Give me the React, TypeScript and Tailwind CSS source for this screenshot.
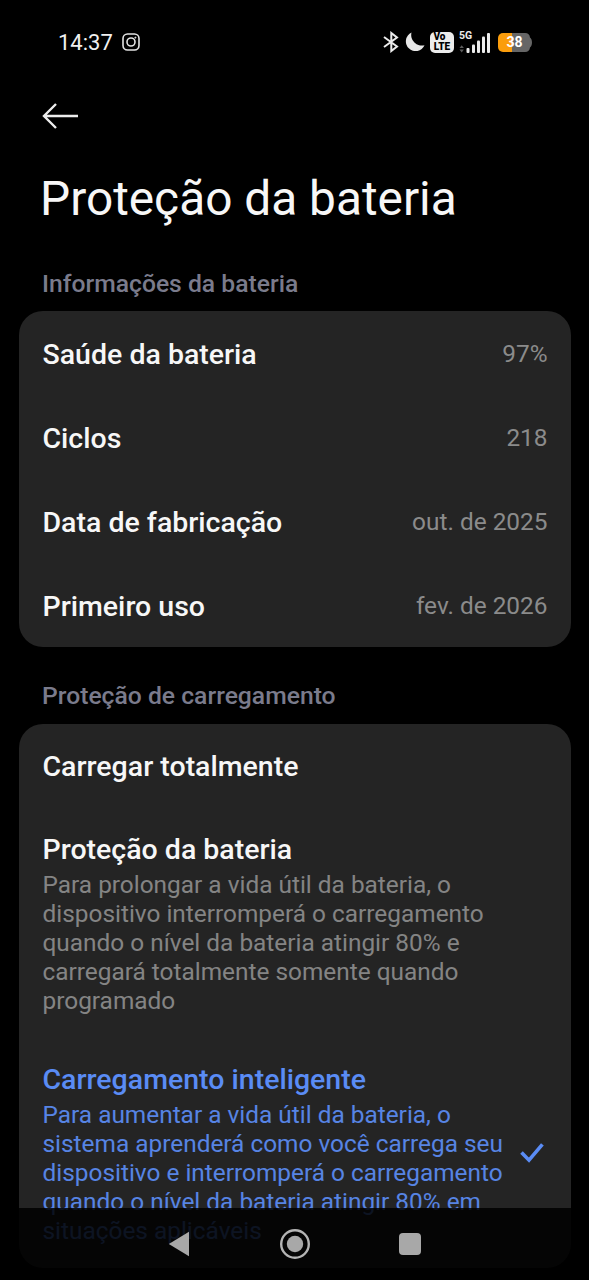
import type { ReactNode } from "react";

const batteryInfo = [
  { label: "Saúde da bateria", value: "97%" },
  { label: "Ciclos", value: "218" },
  { label: "Data de fabricação", value: "out. de 2025" },
  { label: "Primeiro uso", value: "fev. de 2026" },
];

function StatusBar() {
  return (
    <header className="flex h-[84px] items-center justify-between pl-[58px] pr-[57px]">
      <div className="flex items-center gap-[9px]">
        <span className="pt-px text-[22px] leading-7 text-[#f0f0f0]">14:37</span>
        <svg width="18" height="18" viewBox="0 0 18 18" fill="none" stroke="#e4e4e4" strokeWidth="1.6">
          <rect x="1" y="1" width="16" height="16" rx="4.5" />
          <circle cx="9" cy="9" r="4" />
          <circle cx="13.4" cy="4.6" r="0.6" fill="#e4e4e4" strokeWidth="0.8" />
        </svg>
      </div>

      <div className="flex items-center">
        {/* Bluetooth */}
        <svg width="16" height="22" viewBox="0 0 16 22" fill="none" stroke="#ececec" strokeWidth="2">
          <path d="M1 6 14 15.500 8.300 20V2L14 6.500 1 16" />
        </svg>
        {/* Do not disturb */}
        <svg className="ml-[6px]" width="20" height="20" viewBox="0 0 20 20" fill="#e8e8e8">
          <path d="M6.500.6A9.700 9.700 0 1 0 19.500 13.200 10.500 10.500 0 0 1 6.500.6z" />
        </svg>
        {/* VoLTE */}
        <div className="ml-[5px] flex h-[21px] w-6 flex-col items-center justify-center rounded-[5px] bg-[#ececec] text-[10px] font-black leading-none text-black">
          <span className="-ml-[5px]">Vo</span>
          <span>LTE</span>
        </div>
        {/* Signal */}
        <div className="relative ml-[5px] h-[23px] w-[32px]">
          <span className="absolute left-0 top-0 text-[10.5px] font-bold leading-[9px] text-[#ececec]">5G</span>
          <svg width="32" height="23" viewBox="0 0 32 23" fill="#ececec">
            <path d="M.5 17 2.7 14.2 4.9 17zM.5 18.6 2.7 21.4 4.9 18.6z" fill="#5c5c5c" />
            <rect x="7.5" y="17" width="3" height="5" rx="1" />
            <rect x="13" y="13.5" width="3" height="8.5" rx="1" />
            <rect x="18" y="9.5" width="3" height="12.5" rx="1" />
            <rect x="23" y="5.5" width="3" height="16.5" rx="1" />
            <rect x="28" y="2" width="3" height="20" rx="1" />
          </svg>
        </div>
        {/* Battery */}
        <div className="relative ml-[7px] h-[19px] w-[34px]">
          <svg width="34" height="19" viewBox="0 0 34 19">
            <path d="M14 0h13a5 5 0 0 1 5 4.500c1 .6 2 2.400 2 5s-1 4.400-2 5a5 5 0 0 1-5 4.500H14z" fill="#666" />
            <path d="M14 0H5a5 5 0 0 0-5 5v9a5 5 0 0 0 5 5h9z" fill="#fb9d0c" />
          </svg>
          <span className="absolute inset-0 pr-px text-center text-[14px] font-bold leading-[19px] text-white">38</span>
        </div>
      </div>
    </header>
  );
}

function SectionTitle({ children }: { children: ReactNode }) {
  return <h2 className="px-[42px] text-[24.7px] font-medium leading-8 text-[#7a7b8c]">{children}</h2>;
}

function Card({ children }: { children: ReactNode }) {
  return <section className="mx-[18.5px] rounded-[24px] bg-[#242424] px-6">{children}</section>;
}

interface OptionProps {
  title: string;
  description: string;
  selected?: boolean;
}

function Option({ title, description, selected = false }: OptionProps) {
  return (
    <div className="flex h-[230px] items-center justify-between pr-[3px] pt-[2px]">
      <div className="w-[466px]">
        <h3 className={`text-[28.5px] font-medium leading-[33px] ${selected ? "text-[#5a8cf5]" : "text-[#f7f7f7]"}`}>
          {title}
        </h3>
        <p className={`mt-[4px] text-[24.4px] leading-[29px] ${selected ? "text-[#5784e4]" : "text-[#848484]"}`}>
          {description}
        </p>
      </div>
      {selected && (
        <svg className="mb-[2px] shrink-0" width="24" height="22" viewBox="0 0 24 22" fill="none" stroke="#5a8cf5" strokeWidth="3.6">
          <path d="M1.500 10.600 9 18.200 22.400 2.400" />
        </svg>
      )}
    </div>
  );
}

function NavigationBar() {
  return (
    <nav className="absolute inset-x-0 bottom-0 flex h-[72px] items-center justify-center bg-black/85">
      <svg width="22" height="26" viewBox="0 0 22 26" fill="#a8a8a8">
        <path d="M21 .8v24.400L.8 13z" />
      </svg>
      <svg className="ml-[89px]" width="32" height="32" viewBox="0 0 32 32" fill="none">
        <circle cx="16" cy="16" r="13.800" stroke="#b4b4b4" strokeWidth="2.400" />
        <circle cx="16" cy="16" r="8.200" fill="#a8a8a8" />
      </svg>
      <span className="ml-[88px] size-[22px] rounded-[4px] bg-[#a8a8a8]" />
    </nav>
  );
}

export default function App() {
  return (
    <div className="relative h-[1280px] w-[589px] overflow-hidden bg-black font-[Roboto,sans-serif]">
      <StatusBar />

      <main>
        <svg className="ml-[42px] mt-[18px]" width="38" height="28" viewBox="0 0 38 28" fill="none" stroke="#ededed" strokeWidth="2.400">
          <path d="M14 2 2 14l12 12M2 14H36" />
        </svg>
        <h1 className="mt-[41px] px-10 text-[47.8px] leading-[56px] text-[#f7f7f7]">Proteção da bateria</h1>

        <div className="mt-[41px]">
          <SectionTitle>Informações da bateria</SectionTitle>
        </div>
        <div className="mt-[11px]">
          <Card>
            {batteryInfo.map((item) => (
              <div key={item.label} className="flex h-[84px] items-center justify-between pt-[3px]">
                <span className="pt-[2px] text-[28.5px] font-medium text-[#f7f7f7]">{item.label}</span>
                <span className="-mr-px text-[24.4px] text-[#8b8b8b]">{item.value}</span>
              </div>
            ))}
          </Card>
        </div>

        <div className="mt-[33px]">
          <SectionTitle>Proteção de carregamento</SectionTitle>
        </div>
        <div className="mt-[11.5px]">
          <Card>
            <div className="flex h-[84px] items-center pt-[4px]">
              <span className="text-[28.5px] font-medium text-[#f7f7f7]">Carregar totalmente</span>
            </div>
            <Option
              title="Proteção da bateria"
              description="Para prolongar a vida útil da bateria, o dispositivo interromperá o carregamento quando o nível da bateria atingir 80% e carregará totalmente somente quando programado"
            />
            <Option
              selected
              title="Carregamento inteligente"
              description="Para aumentar a vida útil da bateria, o sistema aprenderá como você carrega seu dispositivo e interromperá o carregamento quando o nível da bateria atingir 80% em situações aplicáveis"
            />
          </Card>
        </div>
      </main>

      <NavigationBar />
    </div>
  );
}
